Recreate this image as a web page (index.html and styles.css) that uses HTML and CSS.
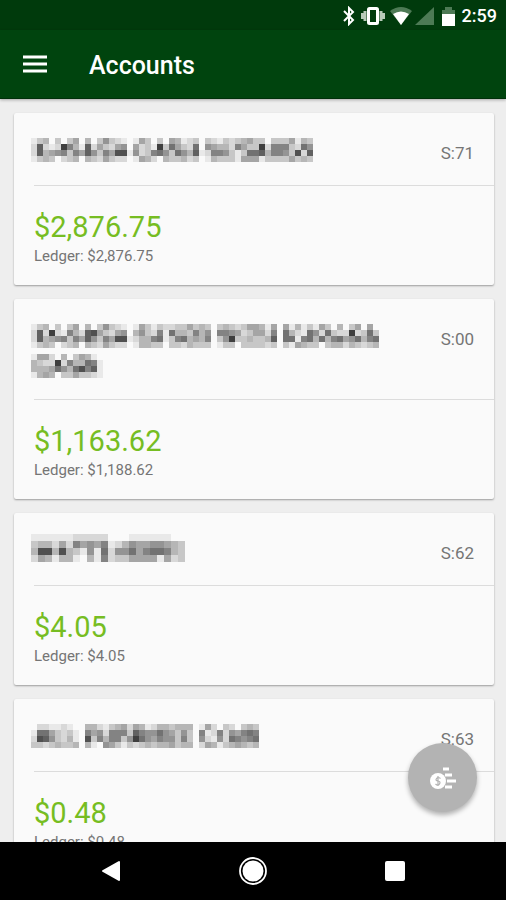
FILE: index.html
```html
<!DOCTYPE html>
<html lang="en">
<head>
    <meta charset="UTF-8">
    <meta name="viewport" content="width=device-width, initial-scale=1.0">
    <title>Accounts</title>
    <link rel="stylesheet" href="styles.css">
</head>
<body>
    <div class="status-bar">
        <svg width="14" height="20" viewBox="0 0 14 20" fill="none" stroke="#fff" stroke-width="2"><path d="M2 5l9 9-4 4V2l4 4-9 9"/></svg>
        <svg class="vibrate" width="24" height="20" viewBox="0 0 24 20"><path d="M1 7v6M4 5v10M20 5v10M23 7v6" stroke="#b8cbb9" stroke-width="3"/><rect x="7.5" y="2.5" width="9" height="15" rx="1" fill="none" stroke="#fff" stroke-width="3"/></svg>
        <svg width="22" height="18" viewBox="0 0 22 18"><path d="M0 4Q11-4 22 4L11 18z" fill="#4d7a55"/><path d="M3 7q8-5 16 0l-8 11z" fill="#fff"/></svg>
        <svg width="19" height="18" viewBox="0 0 19 18"><path d="M19 0v18H0z" fill="#4d7a55"/></svg>
        <svg class="battery" width="13" height="19" viewBox="0 0 13 19"><path d="M0 3h3V0h7v3h3v5H0z" fill="#4d7a55"/><path d="M0 7h13v12H0z" fill="#fff"/></svg>
        <time>2:59</time>
    </div>
    <header>
        <button class="menu-btn" aria-label="Menu">
            <svg width="24" height="18" viewBox="0 0 24 18"><path d="M0 2h24M0 9h24M0 16h24" stroke="#fff" stroke-width="3"/></svg>
        </button>
        <h1>Accounts</h1>
    </header>
    <main>
        <div class="account">
            <div class="account-top">
                <h2 class="mask" data-mask="kasasa-cash" aria-label="Name hidden"></h2>
                <span>S:71</span>
            </div>
            <div class="account-body">
                <p class="amount">$2,876.75</p>
                <p class="ledger">Ledger: $2,876.75</p>
            </div>
        </div>
        <div class="account">
            <div class="account-top">
                <h2 class="mask" data-mask="saver" aria-label="Name hidden"></h2>
                <span>S:00</span>
            </div>
            <div class="account-body">
                <p class="amount">$1,163.62</p>
                <p class="ledger">Ledger: $1,188.62</p>
            </div>
        </div>
        <div class="account">
            <div class="account-top">
                <h2 class="mask mask-coarse" data-mask="rent" data-size="7" aria-label="Name hidden"></h2>
                <span>S:62</span>
            </div>
            <div class="account-body">
                <p class="amount">$4.05</p>
                <p class="ledger">Ledger: $4.05</p>
            </div>
        </div>
        <div class="account">
            <div class="account-top">
                <h2 class="mask" data-mask="club" aria-label="Name hidden"></h2>
                <span>S:63</span>
            </div>
            <div class="account-body">
                <p class="amount">$0.48</p>
                <p class="ledger">Ledger: $0.48</p>
            </div>
        </div>
        <button class="fab" aria-label="Move money">
            <svg width="26" height="24" viewBox="0 0 26 24"><path d="M13 3h6M15 9h7M17 15h9M15 21h7" stroke="#fff" stroke-width="3"/><circle cx="8" cy="15" r="8" fill="#fff"/><path d="M10.500 12.500Q8 10.500 6.500 12.500T8 15t1.500 3-4 0M8 10v10" fill="none" stroke="#b3b3b3" stroke-width="1.200"/></svg>
        </button>
    </main>
    <nav>
        <button aria-label="Back"><svg width="20" height="22" viewBox="0 0 20 22"><path d="M18 2v18L2 11z" fill="#fff" stroke="#fff" stroke-width="2" stroke-linejoin="round"/></svg></button>
        <button aria-label="Home"><svg width="30" height="30" viewBox="0 0 30 30"><circle cx="15" cy="15" r="13" fill="none" stroke="#fff" stroke-width="1.800"/><circle cx="15" cy="15" r="10.500" fill="#fff"/></svg></button>
        <button aria-label="Recent apps"><svg width="20" height="20" viewBox="0 0 20 20"><rect width="20" height="20" rx="2" fill="#fff"/></svg></button>
    </nav>
    <script src="script.js"></script>
</body>
</html>
```
FILE: styles.css
```css
* {
    box-sizing: border-box;
}
body {
    font-family: Roboto, sans-serif;
    margin: 0;
    height: 100vh;
    display: flex;
    flex-direction: column;
    background-color: #eee;
    color: #757575;
}
h1, h2, p {
    margin: 0;
    font-weight: 400;
}
button {
    border: none;
    padding: 0;
    background: none;
    cursor: pointer;
}
svg {
    display: block;
}
.status-bar {
    display: flex;
    justify-content: flex-end;
    align-items: center;
    flex: none;
    height: 30px;
    padding: 2px 9px 0 0;
    gap: 3px;
    background-color: #003a0c;
    color: #fff;
}
.vibrate {
    margin: 0 2px;
}
.battery {
    margin: 0 4px 0 5px;
}
.status-bar time {
    font-size: 18px;
    font-weight: 500;
    line-height: 20px;
}
header {
    display: flex;
    align-items: center;
    flex: none;
    height: 69px;
    padding: 0 23px;
    gap: 42px;
    background-color: #00440e;
    border-bottom: 1px solid #00300a;
    box-shadow: 0 1px 3px rgba(0, 0, 0, 0.3);
    position: relative;
}
h1 {
    color: #fff;
    font-size: 25px;
    font-weight: 500;
    line-height: 32px;
    padding-top: 4px;
}
main {
    flex: 1;
    min-height: 0;
    overflow: hidden;
    position: relative;
    padding: 14px 12px 0 14px;
}
.account {
    background-color: #fafafa;
    border-radius: 2px;
    box-shadow: 0 1px 2px rgba(0, 0, 0, 0.35);
    margin-bottom: 14px;
}
.account-top {
    display: flex;
    justify-content: space-between;
    align-items: flex-start;
    min-height: 73px;
    margin-left: 20px;
    padding: 25px 20px 21px 0;
    border-bottom: 1px solid #dcdcdc;
}
.account-top span {
    font-size: 17px;
    line-height: 30px;
    margin-bottom: -6px;
}
.mask {
    margin-left: -3px;
}
.mask-coarse {
    margin-top: -4px;
}
.account-body {
    padding: 23px 20px 18px;
}
.amount {
    color: #76bd22;
    font-size: 29px;
    line-height: 36px;
}
.ledger {
    font-size: 15px;
    line-height: 22px;
}
.fab {
    position: absolute;
    right: 29px;
    bottom: 30px;
    width: 69px;
    height: 69px;
    border-radius: 50%;
    background-color: #b3b3b3;
    box-shadow: 0 3px 5px rgba(0, 0, 0, 0.3);
    display: flex;
    align-items: center;
    justify-content: center;
}
nav {
    display: flex;
    flex: none;
    align-items: center;
    justify-content: center;
    height: 58px;
    background-color: #000;
}
nav button {
    width: 28%;
    display: flex;
    justify-content: center;
}
```
FILE: script.js
```javascript
// Darkness of each block of a hidden name, one hex digit per block
const masks = {
    'kasasa-cash': [
        '13403035040363210153030541230321323453303335143',
        '29212b741925325605231b3853280654427533b27773286',
        '29456737596375aa1623786386491277631388947763a29',
        '13430234043253220154204334230143331555133335343'
    ],
    saver: [
        '1340303504036321015313223353430343235541505141315304035050',
        '292b217429a532560463271844374607765235527084218628322b2383',
        '29456737596375aa12447813784547036b334334908817848478568478',
        '1343023404325322014433033243330133033332303154330344243234',
        '',
        '15520403541',
        '4322b2744871',
        '44458648a791',
        '145403353321'
    ],
    rent: [
        '1111112222200011111100',
        '3442527565712465566543',
        '4aa4a43161826685788743',
        '2541441041723355551523'
    ],
    club: [
        '02211210044213452541244344401520320343',
        '18853231075627773976686536307127265787',
        '2a9632410a3747736b86576637306216287678',
        '33234334041065313234344534402541345434'
    ]
};

document.querySelectorAll('.mask').forEach(mask => {
    const rows = masks[mask.dataset.mask];
    const size = Number(mask.dataset.size || 6);
    const width = Math.max(...rows.map(row => row.length)) * size;
    const height = rows.length * size;
    let blocks = '';

    rows.forEach((row, y) => {
        [...row].forEach((digit, x) => {
            const grey = 250 - parseInt(digit, 16) * 17;
            blocks += `<rect x="${x * size}" y="${y * size}" width="${size}" height="${size}" fill="rgb(${grey},${grey},${grey})"/>`;
        });
    });

    mask.innerHTML = `<svg width="${width}" height="${height}" shape-rendering="crispEdges">${blocks}</svg>`;
});
```
